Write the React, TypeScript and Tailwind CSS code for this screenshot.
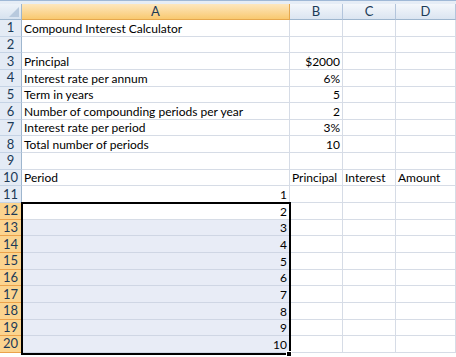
import React from "react";

const COLS = ["A", "B", "C", "D"];
const WIDTHS = ["w-[268px]", "w-[53px]", "w-[53px]", "w-[60px]"];

type Cell = { v: string; right?: boolean };

const data: Cell[][] = [
  [{ v: "Compound Interest Calculator" }],
  [],
  [{ v: "Principal" }, { v: "$2000", right: true }],
  [{ v: "Interest rate per annum" }, { v: "6%", right: true }],
  [{ v: "Term in years" }, { v: "5", right: true }],
  [{ v: "Number of compounding periods per year" }, { v: "2", right: true }],
  [{ v: "Interest rate per period" }, { v: "3%", right: true }],
  [{ v: "Total number of periods" }, { v: "10", right: true }],
  [],
  [{ v: "Period" }, { v: "Principal" }, { v: "Interest" }, { v: "Amount" }],
  ...Array.from({ length: 10 }, (_, i) => [{ v: String(i + 1), right: true }]),
];

function ColHeader({ label, i }: { label: string; i: number }) {
  const sel = i === 0;
  return (
    <div
      className={`${WIDTHS[i]} flex items-center justify-center border-r border-b text-[13px] ${
        sel
          ? "bg-gradient-to-b from-[#fde7be] to-[#f9c96f] border-r-[#e6a84e] border-b-[#e6a84e]"
          : "bg-gradient-to-b from-[#f4f7fb] to-[#dbe5f1] border-r-[#b3c5dc] border-b-[#9eb6ce]"
      } text-[#1b3a57]`}
    >
      {label}
    </div>
  );
}

export default function App() {
  return (
    <div
      className="relative w-[456px] h-[357px] overflow-hidden bg-white text-[12px] leading-none"
      style={{ fontFamily: "Lato, 'Open Sans', sans-serif" }}
    >
      <div className="h-[4px] bg-[#e6edf6] border-t border-[#9fb8d6]" />
      <div className="flex h-[16px]">
        <div className="relative w-[22px] bg-gradient-to-b from-[#eef3f9] to-[#d7e2ef] border-r border-b border-[#9eb6ce]">
          <div className="absolute right-[2px] bottom-[2px] w-0 h-0 border-l-[10px] border-l-transparent border-b-[10px] border-b-[#b8c9dd]" />
        </div>
        {COLS.map((c, i) => (
          <ColHeader key={c} label={c} i={i} />
        ))}
      </div>
      {data.map((row, r) => {
        const n = r + 1;
        const rowSel = n >= 12;
        return (
          <div key={n} className="flex h-[16.65px]">
            <div
              className={`w-[22px] flex items-center justify-center border-r border-b text-[13px] text-[#1b3a57] ${
                rowSel
                  ? "bg-[#fbd48f] border-r-[#e99a3a] border-b-[#eba24b]"
                  : "bg-[#e4ebf5] border-r-[#9eb6ce] border-b-[#c5d3e5]"
              }`}
            >
              {n}
            </div>
            {COLS.map((c, i) => {
              const cell = row[i];
              const selected = rowSel && i === 0 && n !== 12;
              return (
                <div
                  key={c}
                  className={`${WIDTHS[i]} flex items-end pb-[1px] px-[2px] border-r border-b whitespace-nowrap ${
                    selected
                      ? "bg-[#e8ecf6] border-[#cfd6e4]"
                      : "bg-white border-[#d6dce6]"
                  } ${cell?.right ? "justify-end" : "justify-start"} text-black`}
                >
                  {cell?.v}
                </div>
              );
            })}
          </div>
        );
      })}
      <div className="absolute left-[21px] top-[202px] w-[270px] h-[153px] border-2 border-black pointer-events-none" />
      <div className="absolute left-[286px] top-[351px] w-[6px] h-[6px] bg-black border border-white" />
    </div>
  );
}
